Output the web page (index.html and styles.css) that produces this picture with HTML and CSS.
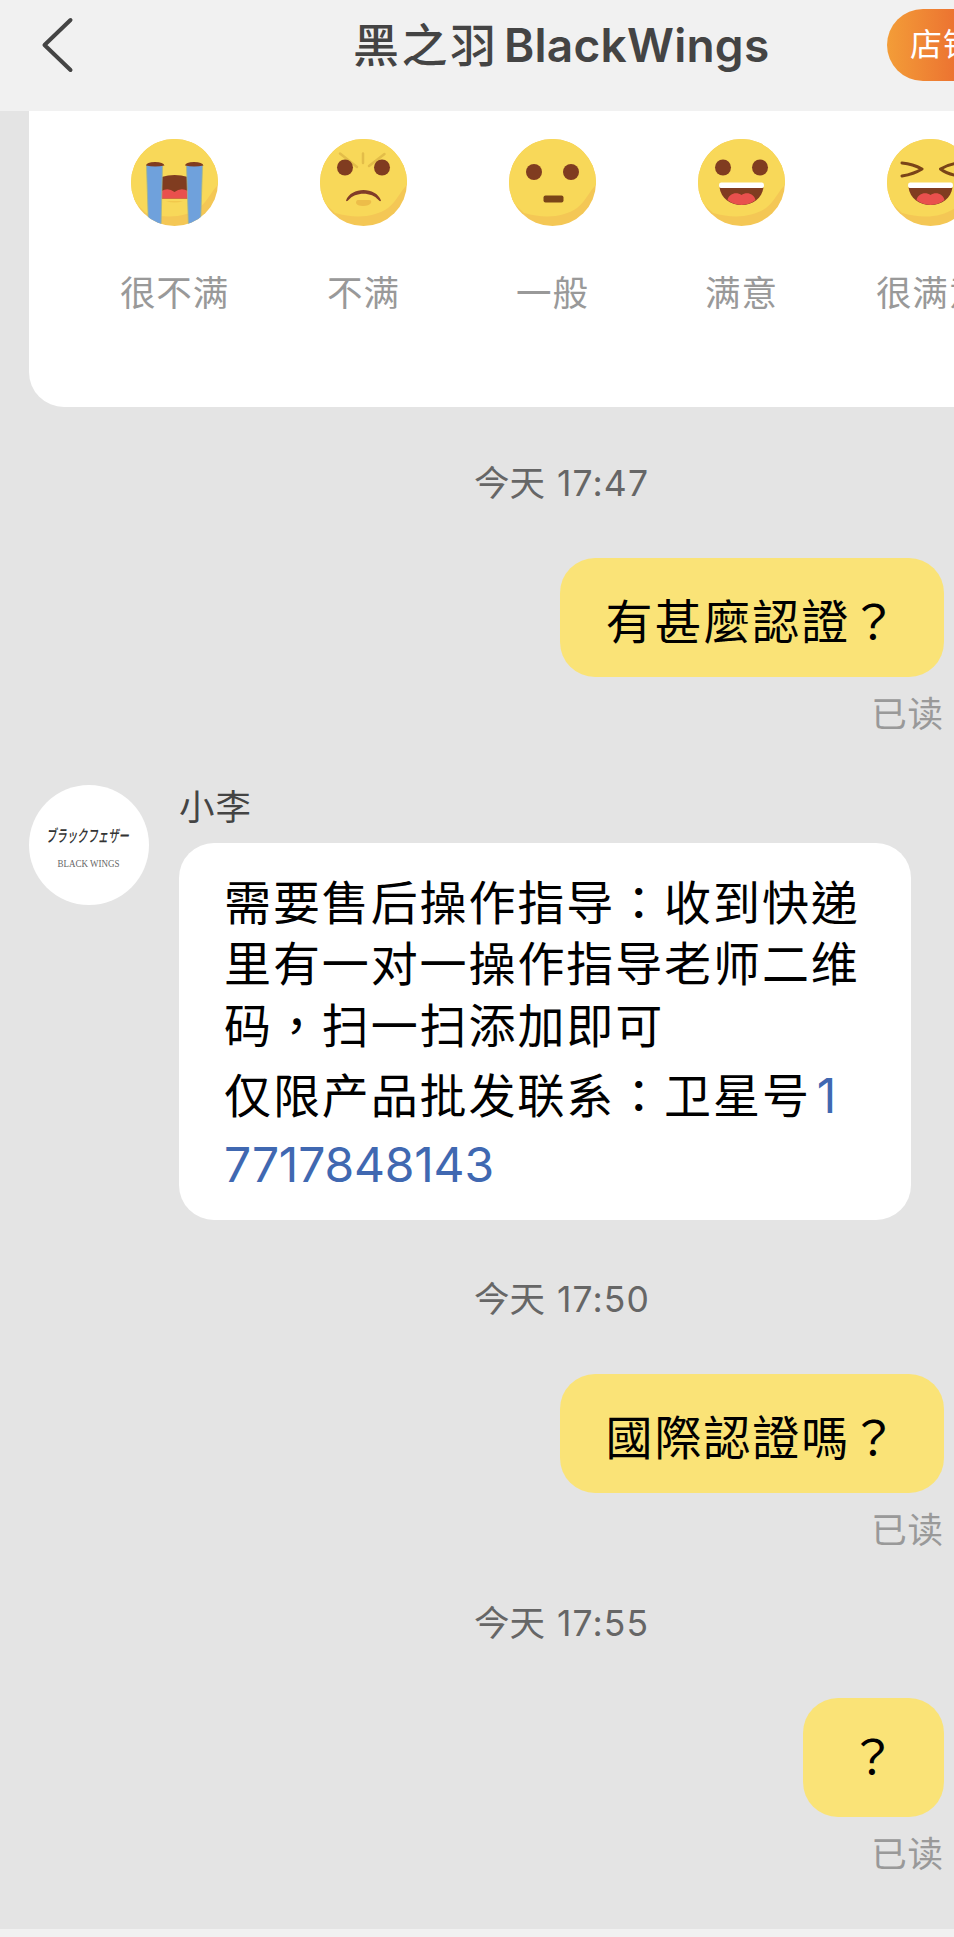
FILE: index.html
```
<!DOCTYPE html>
<html lang="zh-Hant">
<head>
<meta charset="utf-8">
<title>黑之羽BlackWings</title>
<link rel="stylesheet" href="styles.css">
</head>
<body>
<svg class="defs" width="0" height="0" aria-hidden="true">
  <defs>
    <clipPath id="face-clip"><circle cx="43.5" cy="43.5" r="43.5"/></clipPath>
    <g id="face">
      <circle cx="43.5" cy="43.5" r="43.5" fill="#f4c755"/>
      <path clip-path="url(#face-clip)" d="M0 0H87V46C81 51 77 62 68 69C55 78 36 80 15 74L0 60Z" fill="#f8d859"/>
    </g>
    <g id="laugh">
      <path d="M21.500 48.500H65.500C64 59 55 66 43.500 66S23 59 21.500 48.500Z" fill="#803c20"/>
      <path d="M29.500 61C31 54 39 52.500 43.500 56C48 52.500 56 54 57.500 61C49 67.500 38 67.500 29.500 61Z" fill="#e9504d"/>
      <path d="M23 43.500H64Q66 43.500 66 46Q66 49 64 49H23Q21 49 21 46Q21 43.500 23 43.500Z" fill="#fff"/>
    </g>
  </defs>
</svg>
<div class="app">
  <header class="topbar">
    <svg class="back" viewBox="0 0 40 60"><path d="M34.500 6L8.500 31L34.500 56" fill="none" stroke="#444" stroke-width="4" stroke-linecap="round" stroke-linejoin="round"/></svg>
    <h1 class="title"><span class="title-cn">黑之羽</span><span class="title-en">BlackWings</span></h1>
    <div class="shop">店铺</div>
  </header>
  <main class="chat">
    <section class="rating">
      <div class="rate">
        <svg class="emoji" viewBox="0 0 87 87"><use href="#face"/>
          <path d="M30.500 38Q43.500 34 57 38V59.500H30.500Z" fill="#803c20"/>
          <path d="M30.500 52Q37 48 43.500 53Q50 48 57 52V59.500H30.500Z" fill="#e9504d"/>
          <path d="M35 62H52Q44 65 35 62Z" fill="#f2c84c"/>
          <g clip-path="url(#face-clip)" fill="#6fa1dc" stroke="#9fb58e" stroke-width=".8"><path d="M15.500 26H31.500L30 88H17.500Z"/><path d="M55.500 26H71.500L69.500 88H57.500Z"/></g>
          <path d="M15 26.500Q15.500 23 24 23T33.500 26.500Q24 28.500 15 26.500ZM54 26.500Q54.500 23 63 23T72.500 26.500Q63 28.500 54 26.500Z" fill="#803c20"/>
        </svg>
        <span class="rate-label">很不满</span>
      </div>
      <div class="rate">
        <svg class="emoji" viewBox="0 0 87 87"><use href="#face"/>
          <path d="M20 14.500L37 28M64.500 15L49 27M43 14.500V24" fill="none" stroke="#e3bd49" stroke-width="2.500" stroke-linecap="round"/>
          <circle cx="25" cy="28.500" r="8" fill="#803c20"/><circle cx="62" cy="28.500" r="8" fill="#803c20"/>
          <path d="M26 61.500C31 47.500 56 47.500 61 61.500Q60 63 58.500 61C52 52.500 35 52.500 28.500 61Q27 63 26 61.500Z" fill="#803c28"/>
          <path d="M38 61H49Q52 61 51 64Q49 67 43 67T36 64Q36 61 38 61Z" fill="#edbd49"/>
        </svg>
        <span class="rate-label">不满</span>
      </div>
      <div class="rate">
        <svg class="emoji" viewBox="0 0 87 87"><use href="#face"/>
          <circle cx="25" cy="33" r="8" fill="#803c20"/><circle cx="62" cy="33" r="8" fill="#803c20"/>
          <rect x="34.500" y="56.500" width="20" height="7" rx="2" fill="#7a4418"/>
        </svg>
        <span class="rate-label">一般</span>
      </div>
      <div class="rate">
        <svg class="emoji" viewBox="0 0 87 87"><use href="#face"/>
          <circle cx="25" cy="28.500" r="8" fill="#803c20"/><circle cx="62" cy="28.500" r="8" fill="#803c20"/>
          <use href="#laugh"/>
        </svg>
        <span class="rate-label">满意</span>
      </div>
      <div class="rate">
        <svg class="emoji" viewBox="0 0 87 87"><use href="#face"/>
          <path d="M15 24Q26 25 35 30Q27 35 15 37M72 24Q61 25 53.500 30Q60 35 72 37" fill="none" stroke="#7a4418" stroke-width="3" stroke-linecap="round" stroke-linejoin="round"/>
          <use href="#laugh"/>
        </svg>
        <span class="rate-label">很满意</span>
      </div>
    </section>

    <time class="stamp">今天 <span class="clock">17:47</span></time>
    <div class="bubble mine">有甚麼認證？</div>
    <div class="read">已读</div>

    <section class="incoming">
      <svg class="avatar" viewBox="0 0 120 120">
        <circle cx="60" cy="60" r="60" fill="#fff"/>
        <text class="logo-jp" x="17" y="57" textLength="83" lengthAdjust="spacingAndGlyphs">ブラックフェザー</text>
        <text class="logo-en" x="28.500" y="81.500" textLength="62" lengthAdjust="spacingAndGlyphs">BLACK WINGS</text>
      </svg>
      <div class="message">
        <div class="name">小李</div>
        <div class="bubble theirs">
          <p class="tight">需要售后操作指导：收到快递<br>里有一对一操作指导老师二维</p>
          <p class="mid">码，扫一扫添加即可</p>
          <p class="loose">仅限产品批发联系：卫星号<a class="phone first">1</a><br><a class="phone">7717848143</a></p>
        </div>
      </div>
    </section>

    <time class="stamp second">今天 <span class="clock">17:50</span></time>
    <div class="bubble mine">國際認證嗎？</div>
    <div class="read">已读</div>

    <time class="stamp third">今天 <span class="clock">17:55</span></time>
    <div class="bubble mine lone">？</div>
    <div class="read">已读</div>
  </main>
  <footer class="bottombar"></footer>
</div>
</body>
</html>
```
FILE: styles.css
```
* { box-sizing: border-box; }
body {
  margin: 0;
  font-family: Inter, "Noto Sans CJK TC", sans-serif;
  background: #e4e4e4;
  color: #000;
}
p, h1 { margin: 0; }
.defs { display: block; height: 0; }
.app {
  width: 954px;
  height: 1937px;
  overflow: hidden;
  display: flex;
  flex-direction: column;
}
.topbar {
  flex: none;
  height: 111px;
  padding: 9px 0 0 36px;
  background: #f1f1f1;
  display: flex;
  align-items: flex-start;
  overflow: hidden;
}
.back { width: 40px; height: 60px; margin-top: 5px; flex: none; }
.title {
  flex: none;
  width: 534px;
  margin: 0 0 0 277px;
  display: flex;
  color: #444;
  font-size: 46px;
  line-height: 72px;
  white-space: nowrap;
}
.title-cn { font-weight: 500; letter-spacing: 2.500px; width: 151px; }
.title-en { font-weight: 600; letter-spacing: .25px; }
.shop {
  flex: none;
  width: 170px;
  height: 72px;
  padding-left: 23px;
  border-radius: 36px;
  background: linear-gradient(90deg, #f39d38, #ec7331 40%, #e9552b);
  color: #fff;
  font-family: Inter, "Noto Sans CJK SC", sans-serif;
  font-size: 32px;
  letter-spacing: 1px;
  line-height: 71px;
}
.chat {
  flex: 1;
  display: flex;
  flex-direction: column;
  min-height: 0;
}
.rating {
  flex: none;
  height: 296px;
  margin-left: 29px;
  padding: 28px 0 0 51px;
  background: #fff;
  border-bottom-left-radius: 35px;
  display: flex;
  overflow: hidden;
}
.rate {
  flex: none;
  width: 189px;
  display: flex;
  flex-direction: column;
  align-items: center;
}
.emoji { width: 87px; height: 87px; }
.rate-label {
  margin-top: 42px;
  color: #999;
  font-family: Inter, "Noto Sans CJK SC", sans-serif;
  font-size: 35.500px;
  line-height: 52px;
  letter-spacing: .900px;
}
.stamp {
  flex: none;
  margin: 50px 0 0 474px;
  height: 52px;
  color: #666;
  font-size: 35.500px;
  line-height: 54px;
  white-space: nowrap;
}
.clock { margin-left: 2px; letter-spacing: 1.100px; }
.bubble {
  border-radius: 35px;
  font-size: 47px;
  letter-spacing: 1.900px;
}
.mine {
  flex: none;
  align-self: flex-end;
  height: 119px;
  margin: 49px 10px 0 0;
  padding: 0 45px 0 46px;
  background: #fae377;
  line-height: 128px;
}
.mine.lone { padding-right: 46px; line-height: 118px; }
.read {
  flex: none;
  align-self: flex-end;
  margin: 12px 10px 0 0;
  color: #999;
  font-size: 35.500px;
  line-height: 52px;
  letter-spacing: .900px;
}
.incoming {
  flex: none;
  display: flex;
  gap: 30px;
  margin: 44px 0 0 29px;
}
.avatar { width: 120px; height: 120px; flex: none; overflow: visible; }
.logo-jp {
  font-family: "Noto Sans CJK JP", sans-serif;
  font-size: 17px;
  font-style: italic;
  font-weight: 500;
  fill: #333;
}
.logo-en {
  font-family: "Liberation Serif", serif;
  font-size: 10.500px;
  fill: #666;
}
.name {
  height: 44px;
  color: #444;
  font-size: 35.500px;
  line-height: 46px;
  letter-spacing: .900px;
}
.theirs {
  width: 732px;
  height: 377px;
  margin-top: 14px;
  padding: 30px 46px 0 45px;
  background: #fff;
  white-space: nowrap;
}
.tight { line-height: 60.500px; }
.mid { line-height: 64px; }
.loose { line-height: 69px; margin-top: 3px; }
.phone { color: #4068b1; font-size: 48px; letter-spacing: -.2px; }
.first { margin-left: 6px; }
.second { margin-top: 53px; }
.third { margin-top: 40px; }
.bottombar { flex: none; height: 8px; background: #f1f1f1; }
```
